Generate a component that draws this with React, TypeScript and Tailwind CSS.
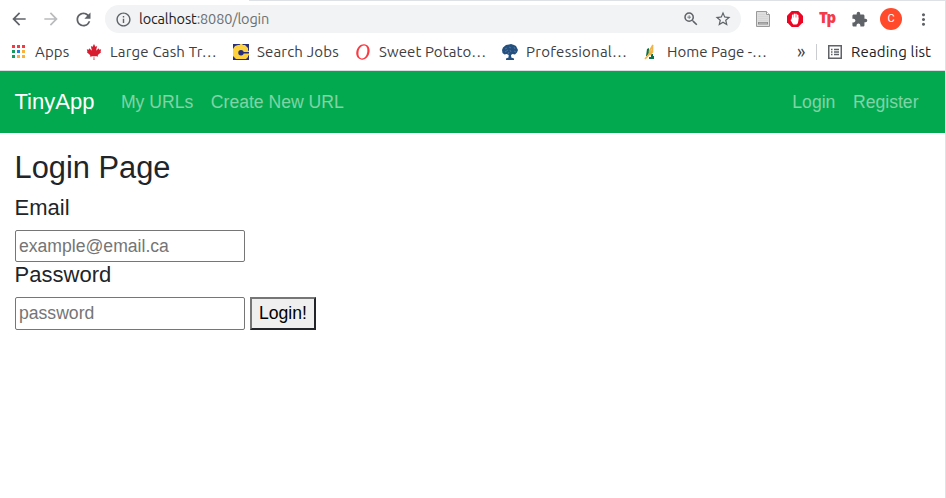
import type { ReactNode } from "react";
import {
  MdArrowBack,
  MdArrowForward,
  MdExtension,
  MdInfoOutline,
  MdMoreVert,
  MdRefresh,
  MdStarBorder,
  MdZoomIn,
} from "react-icons/md";
import { FaCanadianMapleLeaf } from "react-icons/fa";

const appDots = [
  "bg-[#f23b45]", "bg-[#f23b45]", "bg-[#f23b45]",
  "bg-[#159a5f]", "bg-[#1a85e8]", "bg-[#fbb03b]",
  "bg-[#159a5f]", "bg-[#fbb03b]", "bg-[#fbb03b]",
];

function AppsIcon() {
  return (
    <span className="-mt-px ml-[1px] grid grid-cols-3 gap-[2px]">
      {appDots.map((c, i) => (
        <span key={i} className={`size-[3px] ${c}`} />
      ))}
    </span>
  );
}

function CIcon() {
  return (
    <svg width="16" height="16" viewBox="0 0 16 16">
      <path d="M0 0h16v16H0z" fill="#272f7c" />
      <path d="M5 1h1.500l1-1h1.500l1 1H12l3 3v2.500l1 .5v1H8v1h8v2l-1 1v1l-2 2H3l-3-3V5l2-3z" fill="#fdd23e" />
      <path d="M8 8h8v1.500H8z" fill="#272f7c" />
      <circle cx="8" cy="8.700" r="2.700" fill="#272f7c" />
    </svg>
  );
}

function RingIcon() {
  return (
    <svg width="16" height="16" viewBox="0 0 16 16">
      <path fillRule="evenodd" fill="#fb3b43" d="M9.200.200c3.700.200 5.800 3.200 5.400 7.300-.500 4.600-3.700 8.500-7.800 8.200C3 15.300.800 12.200 1.300 8.100 1.900 3.600 5.100 0 9.200.200zM9.300 1.500C6.300 1.300 3.900 4.400 3.500 8c-.400 3.500.8 6.200 3.300 6.400 2.900.200 5.100-3.100 5.500-6.700.400-3.400-.500-6-3-6.200z" />
    </svg>
  );
}

function TreeIcon() {
  return (
    <svg width="16" height="16" viewBox="0 0 16 16">
      <path fill="#24507f" d="M4 1l3-.5L9 0l3 1 2 1 1 2 1 2-1 2.500-2 2-2.500-.5-1.500 1 .3 2.500 2.700 1V16H4v-1.500l2.500-1 .2-2.500-2-1-2.200.500L.500 9 0 6l1-2.500z" />
      <path stroke="#7893b2" strokeWidth=".5" fill="none" d="M3 5l2-1m2-1l2 1m3-1l1 2M3 8l3-2m2 0l1 2m3-1l2 1M6 10l1-2" />
    </svg>
  );
}

function WheatIcon() {
  return (
    <svg width="16" height="16" viewBox="0 0 16 16">
      <path fill="#087348" d="M4 5l2-1v5l-2 3H3zM8 10h2v2h1v3H6v-2h2z" />
      <path fill="none" stroke="#efb44c" strokeWidth="1.700" d="M2 15l4.500-5M6.500 10V7L10 1M6.500 10l3-4V2M7 11l2.500-3V5" />
    </svg>
  );
}

function PageIcon() {
  return (
    <svg width="16" height="18" viewBox="0 0 16 18">
      <path d="M1.500 1.500h10l3 3v12h-13z" fill="#dedede" stroke="#999" />
      <path d="M11.500 1.500v3h3" fill="#fff" stroke="#999" />
      <path d="M3 4.500h7M3 6.500h10M3 8.500h10M3 10.500h10" stroke="#d6d6d6" />
      <path d="M3 12h10v2.500H3z" fill="#8c8c8c" />
      <path d="M4 13.200h8" stroke="#c9c9c9" strokeWidth=".8" />
    </svg>
  );
}

function StopHandIcon() {
  return (
    <svg width="16" height="16" viewBox="0 0 16 16">
      <path d="M4.700 0h6.600L16 4.700v6.600L11.300 16H4.700L0 11.300V4.700z" fill="#ed0524" />
      <path d="M5.600 8V4.200M7.300 7.500V3.200M9 7.500V3.200M10.700 8V4.300" stroke="#fff" strokeWidth="1.400" strokeLinecap="round" />
      <path d="M4.900 6.500h6.500v3l-.5 2.500q-.700 1.600-2 1.600H7.500q-1.300 0-2-1.200L3.500 9l1-.7z" fill="#fff" />
    </svg>
  );
}

function ReadingListIcon() {
  return (
    <svg width="14" height="14" viewBox="0 0 14 14" className="mr-[9px] text-[#5f6368]">
      <path d="M.750.750h12.500v12.500H.750z" fill="none" stroke="currentColor" strokeWidth="1.500" />
      <path d="M3 4.500h1.500M6 4.500h5M3 7h1.500M6 7h5M3 9.500h1.500M6 9.500h5" stroke="currentColor" strokeWidth="1.300" />
    </svg>
  );
}

function Tool({ children }: { children: ReactNode }) {
  return <span className="flex size-8 items-center justify-center text-[#5f6368]">{children}</span>;
}

const bookmarks = [
  { icon: <AppsIcon />, label: "Apps", cell: "w-[75px]", text: "tracking-[0.150px]" },
  { icon: <FaCanadianMapleLeaf size={16} color="#d71c30" />, label: "Large Cash Tr…", cell: "w-[147px]", text: "tracking-[0.170px]" },
  { icon: <CIcon />, label: "Search Jobs", cell: "w-[122px]", text: "tracking-[0.170px]" },
  { icon: <RingIcon />, label: "Sweet Potato…", cell: "w-[147px]", text: "tracking-[0.1px]" },
  { icon: <TreeIcon />, label: "Professional…", cell: "w-[141px]", text: "tracking-[0.250px]" },
  { icon: <WheatIcon />, label: "Home Page -…", cell: "w-[154px]", text: "tracking-[0px]" },
];

function BrowserBar() {
  return (
    <header className="h-[71px] border-b border-[#d9dce0] bg-white font-[Ubuntu,'Noto_Sans',sans-serif] text-[15px] text-[#3c4043]">
      <div className="ml-[249px] h-px bg-[#dee1e6]" />
      <div className="flex h-9 items-center pl-[3px]">
        <Tool><MdArrowBack size={20} /></Tool>
        <Tool><MdArrowForward size={20} className="text-[#b9bbbd]" /></Tool>
        <Tool><MdRefresh size={21} /></Tool>
        <div className="ml-[6px] flex h-7 w-[636px] items-center rounded-full bg-[#f1f3f4] pl-[9.500px]">
          <MdInfoOutline size={17} className="mr-[7.500px] text-[#5f6368]" />
          <span className="text-[14.500px] tracking-[-0.150px] text-[#6b6f73]"><span className="text-[#202124]">localhost</span>:8080/login</span>
          <span className="ml-auto flex pr-[2px]">
            <Tool><MdZoomIn size={18} /></Tool>
            <Tool><MdStarBorder size={18} /></Tool>
          </span>
        </div>
        <div className="ml-[6px] flex">
          <Tool><PageIcon /></Tool>
          <Tool><StopHandIcon /></Tool>
          <Tool><span className="pb-[3px] font-['Open_Sans',sans-serif] text-[15px] leading-none font-extrabold tracking-[-1.300px] text-[#f43b49]">Tp</span></Tool>
          <Tool><MdExtension size={17} /></Tool>
          <Tool><span className="flex size-[22px] items-center justify-center rounded-full bg-[#ff4b2b] font-[Roboto,sans-serif] text-[11px] text-white">C</span></Tool>
          <Tool><MdMoreVert size={19} /></Tool>
        </div>
      </div>
      <div className="flex h-[30px] items-center pl-[11px] whitespace-nowrap">
        {bookmarks.map((b) => (
          <div key={b.label} className={`flex shrink-0 items-center ${b.cell}`}>
            <span className="flex w-6 shrink-0">{b.icon}</span>
            <span className={b.text}>{b.label}</span>
          </div>
        ))}
        <span className="w-[19px] pb-[3px] text-[18px] leading-none">»</span>
        <span className="mr-[11px] h-4 w-px bg-[#c9ccd0]" />
        <ReadingListIcon />
        <span className="tracking-[0.150px] text-[#202124]">Reading list</span>
      </div>
    </header>
  );
}

function NavBar() {
  return (
    <nav className="flex h-[62px] items-center bg-[#02a94f] pl-[14.500px] text-[17.600px] text-white/50">
      <a className="mr-[26.500px] pb-[2px] text-[22px] text-white">TinyApp</a>
      <a className="mr-[17.600px]">My URLs</a>
      <a>Create New URL</a>
      <span className="mr-[26.500px] ml-auto flex gap-[17.600px]">
        <a>Login</a>
        <a>Register</a>
      </span>
    </nav>
  );
}

const inputStyle = "block w-[230px] rounded-[2px] border border-[#767676] bg-white px-[3.400px] placeholder:text-[#757575]";

export default function App() {
  return (
    <div className="h-[498px] overflow-hidden border-r border-[#dee1e6] bg-white font-['Liberation_Sans',Arial,sans-serif] text-[17.600px] text-[#212529]">
      <BrowserBar />
      <NavBar />
      <main className="pt-[16px] pl-[14.600px]">
        <h3 className="mb-[8.800px] text-[30.800px] leading-[37px]">Login Page</h3>
        <form>
          <h5 className="mb-[8.800px] text-[22px] leading-[26.400px]">Email</h5>
          <input type="email" placeholder="example@email.ca" className={`h-[32px] ${inputStyle}`} />
          <h5 className="mb-[8.800px] text-[22px] leading-[26.400px]">Password</h5>
          <div className="flex gap-[5px]">
            <input type="password" placeholder="password" className={`h-[33px] ${inputStyle}`} />
            <button type="button" className="h-[33px] w-[66px] border-2 border-t-[#767676] border-r-[#212529] border-b-[#212529] border-l-[#767676] bg-[#efefef] pb-px pl-[0.500px] text-black">Login!</button>
          </div>
        </form>
      </main>
    </div>
  );
}
